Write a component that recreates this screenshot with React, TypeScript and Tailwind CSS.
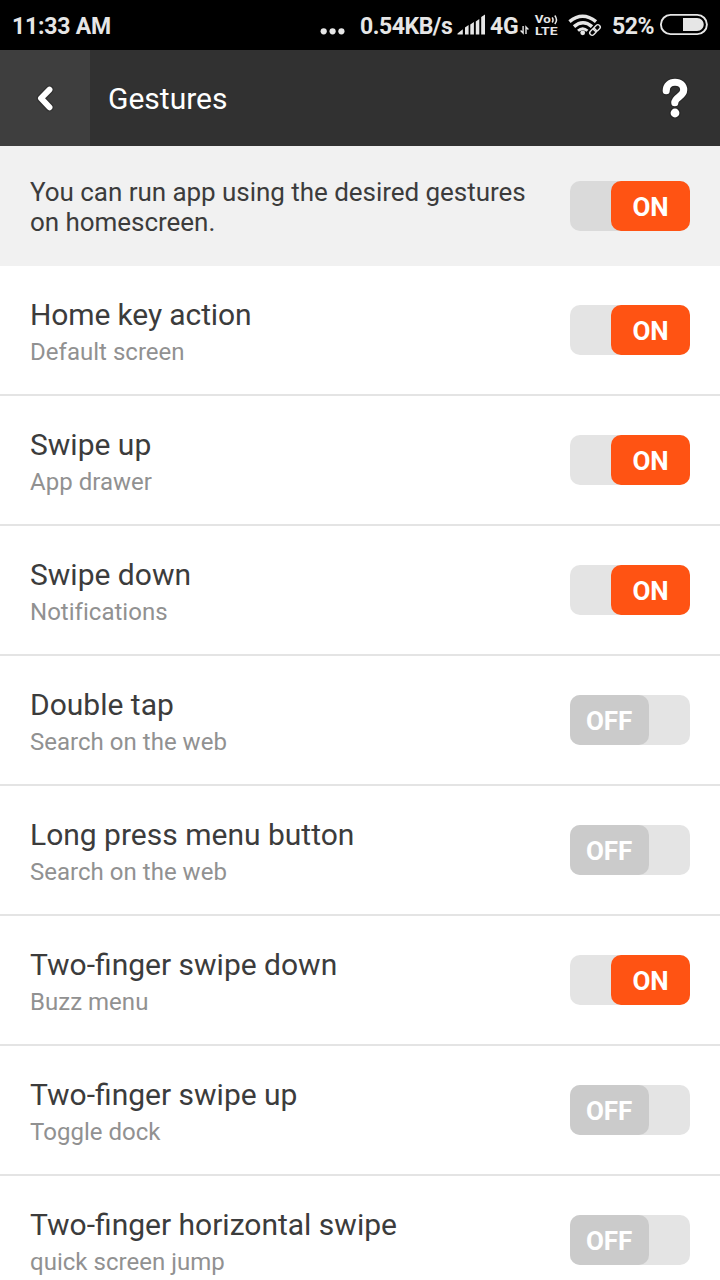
import React, { useState } from "react";

type Gesture = { title: string; detail: string; on: boolean; tight?: boolean };

const gestures: Gesture[] = [
  { title: "Home key action", detail: "Default screen", on: true, tight: true },
  { title: "Swipe up", detail: "App drawer", on: true },
  { title: "Swipe down", detail: "Notifications", on: true },
  { title: "Double tap", detail: "Search on the web", on: false },
  { title: "Long press menu button", detail: "Search on the web", on: false },
  { title: "Two-finger swipe down", detail: "Buzz menu", on: true },
  { title: "Two-finger swipe up", detail: "Toggle dock", on: false },
  { title: "Two-finger horizontal swipe", detail: "quick screen jump", on: false },
];

function Toggle({ initial, dark = false }: { initial: boolean; dark?: boolean }) {
  const [on, setOn] = useState(initial);
  return (
    <button
      type="button"
      role="switch"
      aria-checked={on}
      onClick={() => setOn(!on)}
      className={`flex h-[50px] w-[120px] shrink-0 rounded-[10px] ${dark ? "bg-[#dadada]" : "bg-[#e4e4e4]"} ${on ? "justify-end" : "justify-start"}`}
    >
      <span
        className={`flex h-[50px] w-[79px] items-center justify-center rounded-[10px] pt-0.5 text-[26px] leading-[30px] font-bold tracking-[-0.1px] text-white ${on ? "bg-[#ff5313]" : "bg-[#cbcbcb] pr-px"}`}
      >
        {on ? "ON" : "OFF"}
      </span>
    </button>
  );
}

function StatusBar() {
  return (
    <div className="flex h-[50px] shrink-0 items-center bg-black text-[23px] leading-[50px] font-bold tracking-[-0.3px] whitespace-nowrap text-[#e6e6e6]">
      <span className="ml-3 w-[308px] pt-[3px] tracking-[-0.2px]">11:33 AM</span>
      <svg className="h-[50px] w-[26px] shrink-0" viewBox="320 0 26 50" fill="currentColor">
        <circle cx="323.7" cy="31.3" r="3.1" />
        <circle cx="332.6" cy="31.3" r="3.1" />
        <circle cx="341.4" cy="31.3" r="3.1" />
      </svg>
      <span className="ml-[14px] w-[97px] pt-[3px] tracking-[-0.45px]">0.54KB/s</span>
      <svg className="h-[50px] w-[30px] shrink-0" viewBox="457 0 30 50" fill="currentColor">
        <path d="M457.5 34.5V33.5L462.8 29.3V34.5ZM465 34.5V27.5L468.6 25V34.5ZM470.3 34.5V24.5L473.9 22V34.5ZM475.8 34.5V21.5L479.3 19V34.5ZM481.2 34.5V17L485 14.5V34.5Z" />
      </svg>
      <span className="ml-[3px] w-[29px] pt-[3px]">4G</span>
      <svg className="h-[50px] w-[12px] shrink-0" viewBox="519 0 12 50" fill="none" stroke="currentColor" strokeWidth="1.4">
        <path d="M523.1 26V33L520.6 30.6M526 34V27L528.4 29.4" />
      </svg>
      <svg className="h-[50px] w-[30px] shrink-0" viewBox="531 0 30 50" fill="currentColor">
        <text x="534.7" y="23.4" fontSize="11.6" fontWeight="700" letterSpacing="0" textLength="16" lengthAdjust="spacingAndGlyphs">Vo</text>
        <path d="M552.2 17.3Q554 20 552.2 22.5M554.8 15.5Q558.2 20 554.8 24" fill="none" stroke="currentColor" strokeWidth="1.5" />
        <text x="535" y="35" fontSize="11.8" fontWeight="700" letterSpacing="0" textLength="22.5" lengthAdjust="spacingAndGlyphs">LTE</text>
      </svg>
      <svg className="h-[50px] w-[42px] shrink-0" viewBox="561 0 42 50" fill="none" stroke="currentColor">
        <path d="M569.5 21.6Q582.5 10.8 596 21.6" strokeWidth="3.5" />
        <path d="M574 26.6Q583 18.8 592 26.6" strokeWidth="3.5" />
        <path d="M578 30.8Q582.7 26.6 587.5 30.8" strokeWidth="2.8" />
        <circle cx="582.7" cy="32.8" r="2.4" fill="currentColor" stroke="none" />
        <g transform="rotate(-45 595 30)">
          <rect x="588.6" y="27.6" width="7.2" height="4.8" rx="2.4" strokeWidth="1.4" />
          <rect x="594.2" y="27.6" width="7.2" height="4.8" rx="2.4" strokeWidth="1.4" />
        </g>
      </svg>
      <span className="ml-[9px] w-[47px] pt-[3px] tracking-[-0.5px]">52%</span>
      <svg className="h-[50px] w-[52px] shrink-0" viewBox="659 0 52 50">
        <rect x="660.9" y="14.9" width="46" height="19.2" rx="9.6" fill="none" stroke="currentColor" strokeWidth="1.9" />
        <path d="M683 18H697C701 18 703.7 21 703.7 24.5S701 31 697 31H683Z" fill="currentColor" />
      </svg>
    </div>
  );
}

export default function App() {
  return (
    <main className="flex h-[1280px] w-[720px] flex-col overflow-hidden bg-white font-['Roboto',sans-serif] text-[#3c3c3c]">
      <StatusBar />
      <header className="flex h-24 shrink-0 items-center bg-[#313131] text-white">
        <button type="button" aria-label="Back" className="flex h-24 w-[90px] items-center justify-center bg-[#3e3e3e]">
          <svg className="h-10 w-10" viewBox="25 78 40 40" fill="none" strokeLinecap="round" strokeLinejoin="round">
            <path d="M49.5 89.6L41 98.3L49.5 107.3" stroke="#303030" strokeWidth="8.4" />
            <path d="M49.5 89.6L41 98.3L49.5 107.3" stroke="white" strokeWidth="5.9" />
          </svg>
        </button>
        <h1 className="ml-[18px] flex-1 pt-0.5 text-[30px] leading-9">Gestures</h1>
        <button type="button" aria-label="Help" className="flex h-24 w-[90px] items-center justify-center">
          <svg className="h-12 w-12" viewBox="651 74 48 48" fill="none" strokeLinecap="round">
            <path d="M666.2 90.8C666.2 85.4 670 82.3 675 82.3C680.3 82.3 683.7 85.5 683.7 90C683.7 96.5 674.8 97 674.8 102.8" stroke="#262626" strokeWidth="9.2" />
            <circle cx="675" cy="113" r="5.6" fill="#262626" />
            <path d="M666.2 90.8C666.2 85.4 670 82.3 675 82.3C680.3 82.3 683.7 85.5 683.7 90C683.7 96.5 674.8 97 674.8 102.8" stroke="white" strokeWidth="7.1" />
            <circle cx="675" cy="113" r="4.4" fill="white" />
          </svg>
        </button>
      </header>
      <section className="flex h-[120px] shrink-0 items-center justify-between bg-[#f1f1f1] px-[30px]">
        <p className="w-[510px] pt-px text-[26px] leading-[30px] tracking-[-0.04px]">You can run app using the desired gestures on homescreen.</p>
        <Toggle initial dark />
      </section>
      <ul className="flex flex-col">
        {gestures.map((g) => (
          <li key={g.title} className="flex h-[130px] shrink-0 items-center justify-between border-b-2 border-[#e4e4e4] px-[30px]">
            <div className="pt-[3px]">
              <h2 className={`text-[30px] leading-9 ${g.tight ? "tracking-[-0.12px]" : ""}`}>{g.title}</h2>
              <p className="mt-[5px] text-[24px] leading-7 tracking-[0.02px] text-[#919191]">{g.detail}</p>
            </div>
            <Toggle initial={g.on} />
          </li>
        ))}
      </ul>
    </main>
  );
}
